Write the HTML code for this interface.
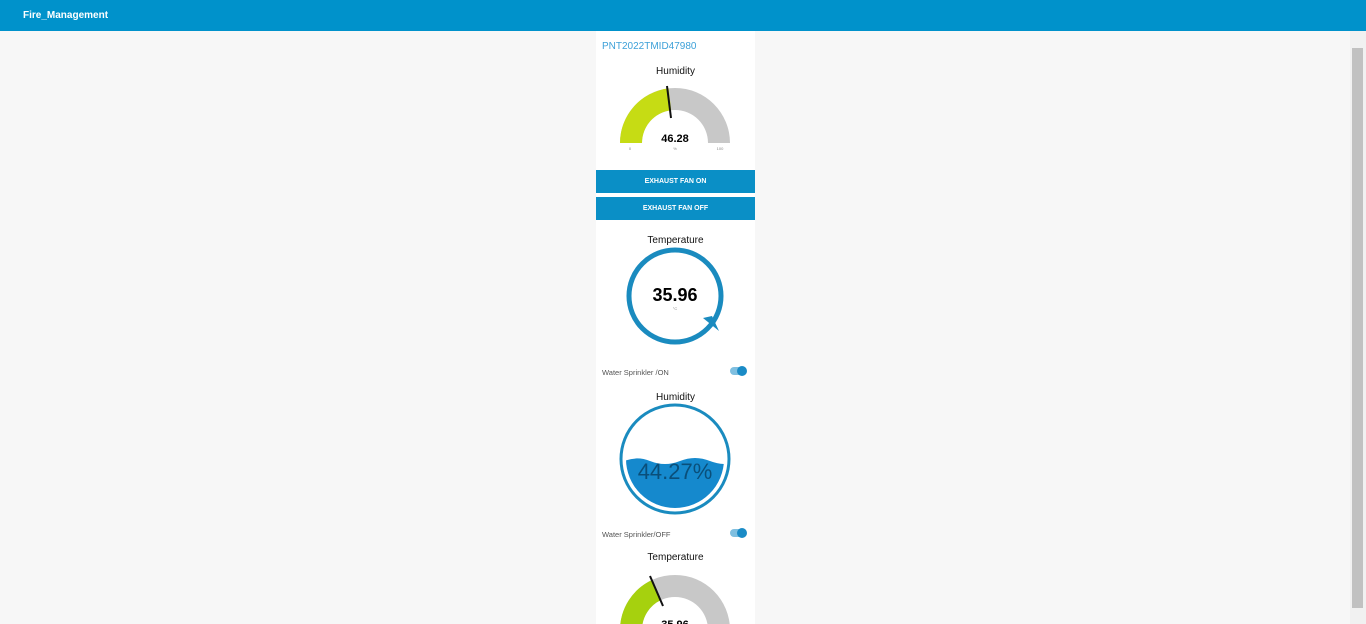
<!DOCTYPE html>
<html><head><style>
body{margin:0;width:1366px;height:624px;overflow:hidden;background:#f7f7f7;font-family:"Liberation Sans",sans-serif;position:relative}
.hdr{position:absolute;left:0;top:0;width:1366px;height:31px;background:#0092cb;color:#fff;font-size:10px;font-weight:bold}
.hdr span{position:absolute;left:23px;top:10px}
.card{position:absolute;left:596px;top:31px;width:159px;height:593px;background:#fff}
.t{position:absolute;font-size:10px;color:#111;width:159px;text-align:center;left:596px}
.btn{position:absolute;left:596px;width:159px;height:23px;background:#0a8fc6;color:#fff;font-size:7px;font-weight:bold;text-align:center;line-height:24px}
.sb{position:absolute;right:0;top:31px;width:16px;height:593px;background:#f1f1f1}
.sb div{position:absolute;left:2px;top:17px;width:11px;height:560px;background:#c1c1c1}
.lbl{position:absolute;left:602px;font-size:7.5px;color:#555}
</style></head><body>
<div class="hdr"><span>Fire_Management</span></div>
<div class="card"></div>
<div style="position:absolute;left:602px;top:41px;font-size:10px;color:#3ca0d8">PNT2022TMID47980</div>
<div class="t" style="top:66px">Humidity</div>
<div class="btn" style="top:170px">EXHAUST FAN ON</div>
<div class="btn" style="top:197px">EXHAUST FAN OFF</div>
<div class="t" style="top:235px">Temperature</div>
<div class="lbl" style="top:368px">Water Sprinkler /ON</div>
<div class="t" style="top:392px">Humidity</div>
<div class="lbl" style="top:530px">Water Sprinkler/OFF</div>
<div class="t" style="top:552px">Temperature</div>
<svg style="position:absolute;left:0;top:0" width="1366" height="624">
<path d="M620 143 A55 55 0 0 1 730 143 L708 143 A33 33 0 0 0 642 143 Z" fill="#c8c8c8"/>
<path d="M620 143 A55 55 0 0 1 668.6 88.4 L671.2 110.2 A33 33 0 0 0 642 143 Z" fill="#c6dc14"/>
<line x1="667" y1="86" x2="671" y2="118" stroke="#111" stroke-width="2"/>
<text x="675" y="142" font-size="11" font-weight="bold" text-anchor="middle" font-family="Liberation Sans" fill="#000">46.28</text>
<text x="630" y="150" font-size="4" fill="#888" text-anchor="middle">0</text>
<text x="675" y="150" font-size="4" fill="#888" text-anchor="middle">%</text>
<text x="720" y="150" font-size="4" fill="#888" text-anchor="middle">100</text>
<circle cx="675" cy="296" r="46" fill="none" stroke="#1a8bbf" stroke-width="5"/>
<path d="M703 318 L712 316 L719 331 Z" fill="#1a8bbf"/>
<text x="675" y="301" font-size="18" font-weight="bold" text-anchor="middle" font-family="Liberation Sans">35.96</text>
<text x="675" y="310" font-size="4" fill="#888" text-anchor="middle">°C</text>
<rect x="730" y="367" width="16" height="8" rx="4" fill="#7fbfe0"/><circle cx="742" cy="371" r="5" fill="#1a8bc6"/>
<rect x="730" y="529" width="16" height="8" rx="4" fill="#7fbfe0"/><circle cx="742" cy="533" r="5" fill="#1a8bc6"/>
<circle cx="675" cy="459" r="54" fill="#fff" stroke="#1a8bbf" stroke-width="3"/>
<clipPath id="c"><circle cx="675" cy="459" r="49"/></clipPath>
<path clip-path="url(#c)" d="M620 463 Q635 455 650 461 T680 461 T710 461 T740 461 L740 520 L620 520 Z" fill="#1589cd"/>
<text x="675" y="479" font-size="22" text-anchor="middle" fill="#0a4f7a" font-family="Liberation Sans">44.27%</text>
<path d="M620 630 A55 55 0 0 1 730 630 L708 630 A33 33 0 0 0 642 630 Z" fill="#c8c8c8"/>
<path d="M620 630 A55 55 0 0 1 651.5 580.3 L661 600 A33 33 0 0 0 642 630 Z" fill="#a6d10e"/>
<line x1="650" y1="576" x2="663" y2="606" stroke="#111" stroke-width="2"/>
<text x="675" y="628" font-size="11" font-weight="bold" text-anchor="middle" font-family="Liberation Sans">35.96</text>
</svg>
<div class="sb"><div></div></div>
</body></html>
